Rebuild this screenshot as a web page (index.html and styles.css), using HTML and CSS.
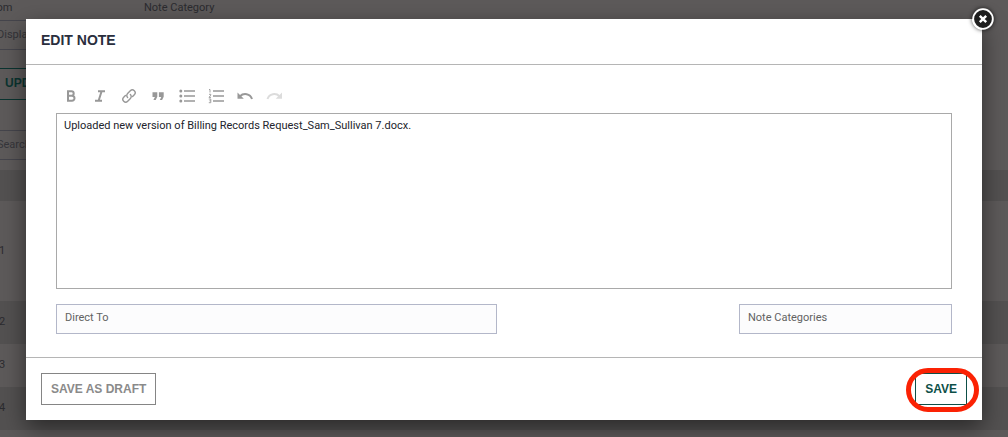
FILE: index.html
```html
<!DOCTYPE html>
<html lang="en">

<head>
    <meta charset="UTF-8">
    <meta name="viewport" content="width=device-width, initial-scale=1.0">
    <title>Edit Note</title>
    <link rel="stylesheet" href="styles.css">
</head>

<body>
    <!-- Notes page -->
    <div class="page">
        <div class="filters">
            <div class="filter">
                <label for="from">From</label>
                <input type="text" id="from" value="Display">
            </div>
            <label class="category-label">Note Category</label>
        </div>
        <button type="button" class="update-btn">UPDATE</button>
        <input type="text" class="search" placeholder="Search" aria-label="Search">
        <table class="notes">
            <tr class="head"><th></th></tr>
            <tr class="tall"><td>1</td></tr>
            <tr><td>2</td></tr>
            <tr><td>3</td></tr>
            <tr><td>4</td></tr>
        </table>
    </div>

    <!-- Edit note dialog -->
    <div class="overlay">
        <div class="modal" role="dialog" aria-labelledby="modalTitle">
            <button type="button" class="close-btn" aria-label="Close">
                <svg width="22" height="22" viewBox="0 0 22 22">
                    <circle cx="11" cy="11" r="9.8" fill="#1e1e1e" stroke="#fff" stroke-width="1.8"/>
                    <path d="M7.800 7.800l6.400 6.400M14.200 7.800l-6.400 6.400" stroke="#fff" stroke-width="2.400"/>
                </svg>
            </button>

            <div class="modal-header">
                <h2 id="modalTitle">EDIT NOTE</h2>
            </div>

            <form class="modal-body">
                <div class="toolbar">
                    <button type="button" aria-label="Bold">
                        <svg viewBox="0 0 16 16"><path d="M5 3.2h3.4a2.2 2.2 0 0 1 0 4.6H5zM5 7.8h4a2.5 2.5 0 0 1 0 5H5z" fill="none" stroke="currentColor" stroke-width="2"/></svg>
                    </button>
                    <button type="button" aria-label="Italic">
                        <svg viewBox="0 0 16 16"><path d="M6 3.3h7M3 12.7h7M9.6 3.3L6.6 12.7" fill="none" stroke="currentColor" stroke-width="2"/></svg>
                    </button>
                    <button type="button" aria-label="Link">
                        <svg viewBox="0 0 16 16"><g fill="none" stroke="currentColor" stroke-width="1.4" stroke-linecap="round"><path d="M6.6 9.4a2.8 2.8 0 0 1 0-4l2.700-2.700a2.700 2.700 0 0 1 4 4L11.600 8.400"/><path d="M9.400 6.600a2.800 2.800 0 0 1 0 4l-2.700 2.700a2.700 2.700 0 0 1-4-4L4.400 7.600"/></g></svg>
                    </button>
                    <button type="button" aria-label="Quote">
                        <svg viewBox="0 0 16 16"><path d="M2.500 4.300h4.800v4.500L5.700 12H3.400l1.500-3H2.500zM8.900 4.300h4.800v4.500L12.100 12H9.800l1.500-3H8.900z" fill="currentColor"/></svg>
                    </button>
                    <button type="button" aria-label="Bulleted list">
                        <svg viewBox="0 0 16 16"><path d="M5 3h11M5 8h11M5 13h11" stroke="currentColor" stroke-width="1.400"/><g fill="currentColor"><circle cx="1.800" cy="3" r="1.500"/><circle cx="1.800" cy="8" r="1.500"/><circle cx="1.800" cy="13" r="1.500"/></g></svg>
                    </button>
                    <button type="button" aria-label="Numbered list">
                        <svg viewBox="0 0 16 16"><path d="M5 3h11M5 8h11M5 13h11" stroke="currentColor" stroke-width="1.400"/><path d="M1 1.500h1v3M1 6.300h1.800v.8L1 9.400h2M.8 11h2v3.700h-2M1.400 12.800h1.400" fill="none" stroke="currentColor" stroke-width=".9"/></svg>
                    </button>
                    <button type="button" aria-label="Undo">
                        <svg viewBox="0 0 16 16"><path d="M0.500 4.500v6.300h6.300z" fill="currentColor"/><path d="M3 8.200C6.500 4.800 13.200 5.400 15 11" fill="none" stroke="currentColor" stroke-width="2"/></svg>
                    </button>
                    <button type="button" aria-label="Redo" disabled>
                        <svg viewBox="0 0 16 16"><path d="M16 4.500v6.300H9.700z" fill="currentColor"/><path d="M13.500 8.200C10 4.800 3.300 5.400 1.500 11" fill="none" stroke="currentColor" stroke-width="2"/></svg>
                    </button>
                </div>
                <textarea class="editor" aria-label="Note" spellcheck="false">Uploaded new version of Billing Records Request_Sam_Sullivan 7.docx.</textarea>
                <div class="fields">
                    <input type="text" class="direct-to" placeholder="Direct To" aria-label="Direct To">
                    <input type="text" class="categories" placeholder="Note Categories" aria-label="Note Categories">
                </div>
            </form>

            <div class="modal-footer">
                <button type="button" class="btn draft">SAVE AS DRAFT</button>
                <button type="button" class="btn save">SAVE</button>
            </div>
        </div>
    </div>
</body>

</html>
```
FILE: styles.css
```css
* {
    box-sizing: border-box;
}

body {
    margin: 0;
    height: 100vh;
    overflow: hidden;
    background: #5d5a5a;
    color: #2b2b2f;
    font-family: Roboto, "Liberation Sans", sans-serif;
    font-size: 11px;
}

input,
textarea,
button {
    font: inherit;
}

/* page behind the dialog */
.page {
    margin-left: -13px;
}

.filters {
    display: flex;
    gap: 37px;
    line-height: 16px;
}

.filter {
    display: flex;
    flex-direction: column;
    gap: 4px;
    width: 120px;
}

.filter input,
.search {
    display: block;
    height: 30px;
    padding: 0 9px 2px;
    border: 1px solid #45454c;
    background: transparent;
    color: #333338;
}

.search::placeholder {
    color: #36363b;
}

.update-btn {
    display: block;
    width: 90px;
    height: 32px;
    margin: 18px 0 30px;
    padding: 0 0 2px 17px;
    border: 1px solid #0b3430;
    background: transparent;
    color: #0b3430;
    font-family: "Liberation Sans", sans-serif;
    font-size: 12px;
    font-weight: bold;
    text-align: left;
}

.search {
    width: 200px;
}

.notes {
    width: 100%;
    margin-top: 10px;
    border-collapse: collapse;
}

.notes tr {
    height: 43px;
}

.notes .head {
    height: 31px;
}

.notes .tall {
    height: 100px;
}

.notes tr:nth-child(odd) {
    background: #535151;
}

.notes tr:nth-child(even) {
    background: #5d5a5a;
}

.notes td {
    padding: 0 12px 2px;
}

/* dialog */
.overlay {
    position: absolute;
    inset: 0;
    padding: 19px 26px;
}

.modal {
    position: relative;
    background: #fff;
    box-shadow: 0 8px 22px rgba(0, 0, 0, 0.5);
}

.close-btn {
    position: absolute;
    top: -11px;
    right: -12px;
    width: 22px;
    height: 22px;
    padding: 0;
    border: none;
    border-radius: 50%;
    background: none;
    box-shadow: 0 0 4px rgba(0, 0, 0, 0.7);
}

.close-btn svg {
    display: block;
}

.modal-header {
    padding: 11px 15px 14px;
    border-bottom: 1px solid #b5b5b5;
}

.modal-header h2 {
    margin: 0;
    color: #2a2e3d;
    font-family: "Liberation Sans", sans-serif;
    font-size: 14px;
    line-height: 20px;
}

.modal-body {
    padding: 20px 30px 23px;
}

.toolbar {
    display: flex;
    gap: 13px;
    padding: 3px 7px 9px;
}

.toolbar button {
    width: 16px;
    height: 16px;
    padding: 0;
    border: none;
    background: none;
    color: #989898;
}

.toolbar button:disabled {
    color: #dcdcdc;
}

.toolbar svg {
    display: block;
    width: 16px;
    height: 16px;
}

.editor {
    display: block;
    width: 100%;
    height: 176px;
    padding: 4px 7px;
    border: 1px solid #a9a9a9;
    color: #22242c;
    line-height: 16px;
    resize: none;
}

.fields {
    display: grid;
    grid-template-columns: 441fr 213fr;
    column-gap: 27%;
    margin-top: 15px;
}

.fields input {
    min-width: 0;
    height: 30px;
    padding: 0 8px 4px;
    border: 1px solid #b3b7c9;
    background: #fcfcfd;
}

.fields input::placeholder {
    color: #626262;
}

.modal-footer {
    display: flex;
    justify-content: space-between;
    padding: 15px;
    border-top: 1px solid #b5b5b5;
}

.btn {
    position: relative;
    height: 32px;
    padding: 0 9px;
    border: 1px solid #858585;
    background: #fff;
    color: #8a8a8a;
    font-family: "Liberation Sans", sans-serif;
    font-size: 12px;
    font-weight: bold;
}

.save {
    border-color: #0d4f48;
    color: #0d4f48;
}

/* red highlight ring */
.save::after {
    content: "";
    position: absolute;
    inset: -6px -13px -8px -10px;
    border: 5px solid #fb2204;
    border-radius: 22px;
}
```
